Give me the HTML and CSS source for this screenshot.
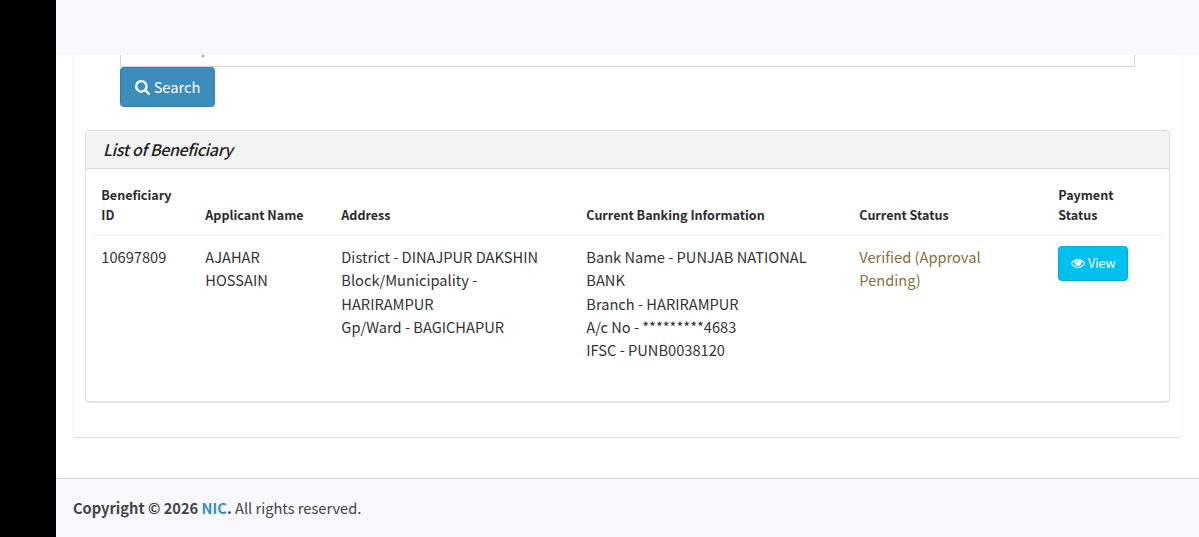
FILE: index.html
```
<!DOCTYPE html>
<html>
<head>
<meta charset="utf-8" />
<title>List of Beneficiary</title>
<link rel="stylesheet" href="styles.css">
</head>

<body>
<div class="wrapper">
<div class="sidebar"></div>

<div class="main">
<div class="navbar"></div>

<div class="content">
<div class="box">

<div class="search-form">
<div class="field"><span class="mark"></span></div>
<button type="button" class="btn btn-search">
<svg class="icon-search" viewBox="0 0 1664 1664"><path d="M1152 704q0-185-131.500-316.500t-316.500-131.500-316.500 131.500-131.500 316.500 131.500 316.500 316.500 131.500 316.500-131.500 131.500-316.500zM1664 1536q0 52-38 90t-90 38q-54 0-90-38l-343-342q-179 124-399 124-143 0-273.500-55.500t-225-150-150-225-55.500-273.500 55.500-273.500 150-225 225-150 273.500-55.500 273.500 55.500 225 150 150 225 55.500 273.500q0 220-124 399l343 343q37 37 37 90z"/></svg>
<span>Search</span>
</button>
</div>

<div class="panel">
<div class="panel-heading"><span class="panel-title">List of Beneficiary</span></div>
<div class="panel-body">
<table class="list">
<colgroup>
<col class="c-id"><col class="c-name"><col class="c-address"><col class="c-bank"><col class="c-status"><col class="c-pay">
</colgroup>
<thead>
<tr>
<th>Beneficiary<br>ID</th>
<th>Applicant Name</th>
<th>Address</th>
<th>Current Banking Information</th>
<th>Current Status</th>
<th>Payment<br>Status</th>
</tr>
</thead>
<tbody>
<tr>
<td>10697809</td>
<td>AJAHAR<br>HOSSAIN</td>
<td>District - DINAJPUR DAKSHIN<br>Block/Municipality -<br>HARIRAMPUR<br>Gp/Ward - BAGICHAPUR</td>
<td>Bank Name - PUNJAB NATIONAL<br>BANK<br>Branch - HARIRAMPUR<br>A/c No - *********4683<br>IFSC - PUNB0038120</td>
<td class="pending">Verified (Approval<br>Pending)</td>
<td>
<button type="button" class="btn btn-view">
<svg class="icon-eye" viewBox="0 0 1792 1152"><path d="M1664 576q-152-236-381-353 61 104 61 225 0 185-131.500 316.500t-316.500 131.500-316.500-131.500-131.500-316.500q0-121 61-225-229 117-381 353 133 205 333.500 326.500t434.500 121.500 434.500-121.500 333.500-326.500zM944 192q0-20-14-34t-34-14q-125 0-214.500 89.500t-89.500 214.500q0 20 14 34t34 14 34-14 14-34q0-86 61-147t147-61q20 0 34-14t14-34zM1792 576q0 34-20 69-140 230-376.500 368.500t-499.500 138.500-499.500-139-376.500-368q-20-35-20-69t20-69q140-229 376.500-368t499.500-139 499.500 139 376.500 368q20 35 20 69z"/></svg>
<span>View</span>
</button>
</td>
</tr>
</tbody>
</table>
</div>
</div>

</div>
</div>

<div class="footer">
<strong>Copyright © 2026 <a class="nic">NIC</a>.</strong> All rights reserved.
</div>
</div>
</div>
</body>
</html>
```
FILE: styles.css
```
*
{
	box-sizing: border-box;
}

body
{
	margin: 0;
	font-family: "Noto Sans CJK JP", "Noto Sans", sans-serif;
	font-size: 14.65px;
	line-height: 23.33px;
	color: #333;
	background-color: #fefefe;
}

.wrapper
{
	display: flex;
	height: 537px;
	overflow: hidden;
}

.sidebar
{
	width: 56px;
	background-color: #000;
}

.main
{
	flex: 1;
	display: flex;
	flex-direction: column;
}

.navbar
{
	height: 55px;
	background-color: #f8f8ff;
}

.content
{
	height: 423px;
	padding: 0 17px;
}

.box
{
	height: 382px;
	padding: 0 12px;
	background-color: #fff;
	border-radius: 0 0 4px 4px;
	box-shadow: 0 1px 1px rgba(0,0,0,0.12);
	border: 1px solid #fafafa;
	border-width: 0 1px;
}

.search-form
{
	height: 75px;
	padding: 0 34px;
}

.field
{
	display: flex;
	height: 12px;
	border: 1px solid #d5d6d8;
	border-top: 0;
}

.mark
{
	width: 2px;
	height: 2px;
	margin-left: 81px;
	background-color: #999;
}

.btn
{
	display: flex;
	align-items: center;
	justify-content: center;
	padding: 0;
	font-family: inherit;
	color: #fff;
	border-radius: 3.5px;
}

.btn svg
{
	fill: #fff;
}

.btn-search
{
	width: 95px;
	height: 40px;
	gap: 4px;
	font-size: 14.65px;
	background-color: #3c8dbc;
	border: 1px solid #367fa9;
}

.btn-search span
{
	padding-bottom: 2px;
}

.icon-search
{
	width: 15px;
	height: 15px;
}

.panel
{
	height: 272px;
	margin-right: -1px;
	margin-left: -1px;
	border: 1px solid #ddd;
	border-radius: 4px;
	box-shadow: 0 1px 1px rgba(0,0,0,0.1);
}

.panel-heading
{
	height: 38px;
	padding: 0 17px;
	line-height: 37px;
	background-color: #f4f4f4;
	border-bottom: 1px solid #ddd;
	border-radius: 3px 3px 0 0;
}

.panel-title
{
	font-size: 16px;
	font-weight: 500;
	font-style: italic;
	letter-spacing: -0.35px;
	color: #222;
}

.panel-body
{
	padding: 6px;
}

.list
{
	width: 1071px;
	table-layout: fixed;
	border-collapse: separate;
	border-spacing: 0;
}

.c-id { width: 104px; }
.c-name { width: 136px; }
.c-address { width: 245px; }
.c-bank { width: 273px; }
.c-status { width: 199px; }
.c-pay { width: 114px; }

.list th
{
	padding: 9.5px 0 9.5px 9.3px;
	font-size: 12.56px;
	line-height: 20px;
	font-weight: bold;
	text-align: left;
	vertical-align: bottom;
	color: #2b2b2b;
	border-bottom: 2px solid #f4f4f4;
}

.list td
{
	padding: 9px 0 9px 9.3px;
	vertical-align: top;
	white-space: nowrap;
}

.list .pending
{
	color: #8a6d3b;
}

.btn-view
{
	width: 70px;
	height: 35px;
	margin-top: 1px;
	gap: 3px;
	font-size: 12.56px;
	background-color: #00c0ef;
	border: 1px solid #00acd6;
}

.btn-view span
{
	padding-bottom: 2px;
}

.icon-eye
{
	width: 14px;
	height: 9px;
}

.footer
{
	flex: 1;
	padding: 17px;
	color: #444;
	background-color: #f8f8ff;
	border-top: 1px solid #d2d6de;
}

.nic
{
	color: #3c8dbc;
}
```
